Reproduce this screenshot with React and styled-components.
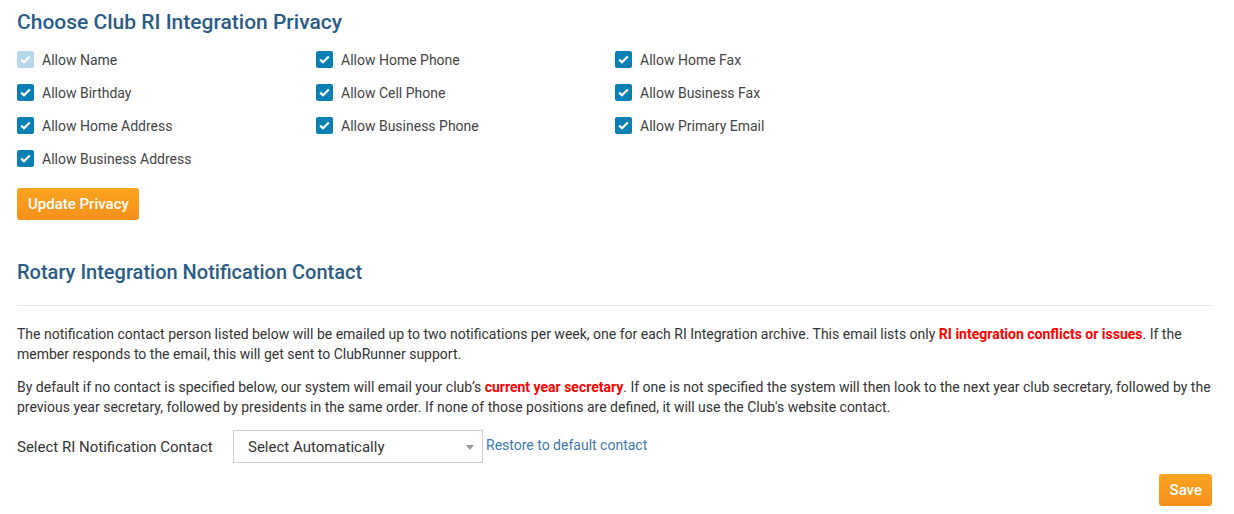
import React from "react";
import styled, { createGlobalStyle } from "styled-components";

const GlobalStyle = createGlobalStyle`
  body {
    margin: 0;
    background: #fff;
    font-family: Roboto, "Liberation Sans", sans-serif;
    color: #444;
  }
`;

const Page = styled.div`
  padding: 9px 22px 0 17px;
  width: 1234px;
  box-sizing: border-box;
`;

const Heading = styled.h2`
  margin: 0;
  font-size: 21px;
  font-weight: 500;
  color: #2b5c86;
  line-height: 26px;
`;

const SubHeading = styled(Heading)`
  font-size: 20px;
  margin-top: 39px;
`;

const CheckGrid = styled.div`
  display: grid;
  grid-template-columns: 299px 299px 299px;
  grid-template-rows: repeat(4, 33px);
  grid-auto-flow: column;
  margin-top: 8px;
`;

const CheckRow = styled.label`
  display: flex;
  align-items: center;
  gap: 8px;
  font-size: 14px;
  color: #444;
  height: 33px;
`;

const Box = styled.span`
  width: 17px;
  height: 17px;
  border-radius: 2px;
  background: ${({ $disabled }) => ($disabled ? "#b4d8e9" : "#0a7fb4")};
  display: grid;
  place-items: center;
`;

const OrangeButton = styled.button`
  border: none;
  border-radius: 3px;
  background: linear-gradient(#fba41f, #f6901c);
  color: #fff;
  font-family: Roboto, "Liberation Sans", sans-serif;
  font-size: 15px;
  font-weight: 500;
  height: 32px;
  padding: 0 10px 0 11px;
  cursor: pointer;
`;

const UpdateButton = styled(OrangeButton)`
  margin-top: 13px;
`;

const Rule = styled.hr`
  border: none;
  border-top: 1px solid #e5e5e5;
  margin: 20px 0 18px;
`;

const Para = styled.p`
  margin: 0 0 13px;
  font-size: 14px;
  line-height: 20px;
  color: #333;
`;

const Alert = styled.strong`
  color: #f00;
  font-weight: 700;
`;

const SelectRow = styled.div`
  display: flex;
  align-items: center;
`;

const SelectLabel = styled.span`
  font-size: 15px;
  color: #333;
  width: 216px;
`;

const FakeSelect = styled.div`
  width: 250px;
  height: 33px;
  box-sizing: border-box;
  border: 1px solid #ccc;
  display: flex;
  align-items: center;
  justify-content: space-between;
  padding: 0 8px 0 14px;
  font-size: 15px;
  color: #333;
`;

const Caret = styled.span`
  width: 0;
  height: 0;
  border-left: 4px solid transparent;
  border-right: 4px solid transparent;
  border-top: 5px solid #999;
  margin-top: 2px;
`;

const RestoreLink = styled.a`
  color: #3f78ad;
  font-size: 14px;
  margin-left: 3px;
  margin-top: -3px;
  text-decoration: none;
`;

const Footer = styled.div`
  display: flex;
  justify-content: flex-end;
  margin-top: 11px;
`;

const items = [
  ["Allow Name", true],
  ["Allow Birthday"],
  ["Allow Home Address"],
  ["Allow Business Address"],
  ["Allow Home Phone"],
  ["Allow Cell Phone"],
  ["Allow Business Phone"],
  null,
  ["Allow Home Fax"],
  ["Allow Business Fax"],
  ["Allow Primary Email"],
];

function Check({ disabled }) {
  return (
    <Box $disabled={disabled}>
      <svg width="11" height="9" viewBox="0 0 11 9">
        <path d="M1.2 4.6 L4 7.3 L9.8 1.5" fill="none" stroke="#fff" strokeWidth="2.2" />
      </svg>
    </Box>
  );
}

export default function App() {
  return (
    <>
      <GlobalStyle />
      <Page>
        <Heading>Choose Club RI Integration Privacy</Heading>
        <CheckGrid>
          {items.map((it, i) =>
            it ? (
              <CheckRow key={i}>
                <Check disabled={it[1]} />
                {it[0]}
              </CheckRow>
            ) : (
              <span key={i} />
            )
          )}
        </CheckGrid>
        <UpdateButton>Update Privacy</UpdateButton>
        <SubHeading>Rotary Integration Notification Contact</SubHeading>
        <Rule />
        <Para>
          The notification contact person listed below will be emailed up to two notifications per week, one for
          each RI Integration archive. This email lists only <Alert>RI integration conflicts or issues</Alert>. If the
          member responds to the email, this will get sent to ClubRunner support.
        </Para>
        <Para>
          By default if no contact is specified below, our system will email your club’s{" "}
          <Alert>current year secretary</Alert>. If one is not specified the system will then look to the next year
          club secretary, followed by the previous year secretary, followed by presidents in the same order. If none
          of those positions are defined, it will use the Club's website contact.
        </Para>
        <SelectRow>
          <SelectLabel>Select RI Notification Contact</SelectLabel>
          <FakeSelect>
            Select Automatically
            <Caret />
          </FakeSelect>
          <RestoreLink href="#">Restore to default contact</RestoreLink>
        </SelectRow>
        <Footer>
          <OrangeButton>Save</OrangeButton>
        </Footer>
      </Page>
    </>
  );
}
